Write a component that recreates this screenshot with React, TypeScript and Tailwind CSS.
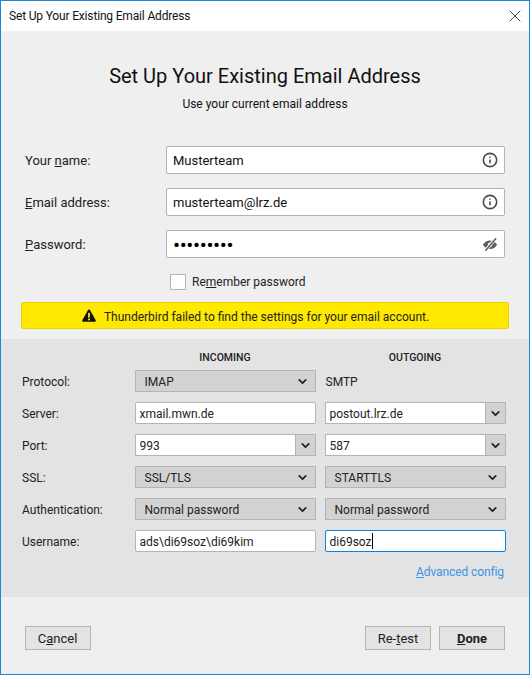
import { ChevronDown, Info, X } from "lucide-react";

const font = { fontFamily: '"Roboto", "Noto Sans", sans-serif' };

function Chevron() {
  return <ChevronDown className="w-[13px] h-[13px] text-[#222]" strokeWidth={3.2} />;
}

// plain dropdown, whole thing grey
function SelectBox({ value }: { value: string }) {
  return (
    <div className="h-[22px] flex items-center justify-between pl-[9px] pr-[6px] bg-[#d2d2d2] border border-[#b4b4b4]">
      <span className="pt-[2px]">{value}</span>
      <Chevron />
    </div>
  );
}

// text field with a grey dropdown button on the right
function Combo({ value }: { value: string }) {
  return (
    <div className="h-[22px] flex items-stretch bg-white border border-[#b4b4b4]">
      <span className="flex-1 pl-[4px] leading-[22px]">{value}</span>
      <div className="w-[20px] flex items-center justify-center bg-[#d2d2d2] border-l border-[#b4b4b4]">
        <Chevron />
      </div>
    </div>
  );
}

function TextBox({ value, focused }: { value: string; focused?: boolean }) {
  return (
    <div className={`h-[22px] flex items-center pl-[4px] bg-white border rounded-[2px] ${focused ? "border-[#0a84e0]" : "border-[#b4b4b4]"}`}>
      <span className="pt-[2px]">{value}</span>
      {focused && <span className="w-px h-[16px] bg-black" />}
    </div>
  );
}

function FieldRow({ label, value, icon, dots }: { label: React.ReactNode; value: string; icon: React.ReactNode; dots?: boolean }) {
  return (
    <div className="flex items-center pl-[24px] pr-[24px]">
      <label className="w-[141px] pt-[2px] text-[13px] text-[#222]">{label}</label>
      <div className="flex-1 h-[28px] flex items-center justify-between pl-[6px] pr-[6px] bg-white border border-[#b4b4b4] rounded-[2px]">
        <span className={dots ? "pt-[2px] text-[21px] leading-[20px] tracking-[-0.4px] text-black" : "pt-[2px] text-[13px] text-[#111]"}>{value}</span>
        {icon}
      </div>
    </div>
  );
}

function EyeSlash() {
  return (
    <svg width="16" height="15" viewBox="0 0 15 14" fill="none" className="text-[#5e5e5e]">
      <path d="M0.8 7.2C2.4 4.6 4.8 3.2 7.5 3.2s5.1 1.4 6.7 4c-1.6 2.6-4 4-6.7 4s-5.1-1.4-6.7-4z" fill="currentColor" />
      <circle cx="7.5" cy="7.2" r="2.1" fill="#fff" />
      <path d="M3 12.8L13 1.2" stroke="#fff" strokeWidth="3" />
      <path d="M3.2 12.8L13.2 1.2" stroke="currentColor" strokeWidth="1.5" />
    </svg>
  );
}

function WarnIcon() {
  return (
    <svg width="14" height="13" viewBox="0 0 14 13">
      <path d="M7 0.5c.5 0 .9.3 1.1.7l5.6 10c.4.7-.1 1.6-1 1.6H1.3c-.9 0-1.4-.9-1-1.6l5.6-10C6.100.8 6.500.500 7 .500z" fill="#111" />
      <rect x="6.100" y="3.800" width="1.800" height="4.800" fill="#ffe900" />
      <rect x="6.100" y="9.500" width="1.800" height="1.800" fill="#ffe900" />
    </svg>
  );
}

function ServerRow({ label, children }: { label: string; children: React.ReactNode }) {
  return (
    <div className="grid grid-cols-[103.5px_181px_181px] gap-x-[9px] items-center h-[22px]">
      <span className="pt-[2px]">{label}</span>
      {children}
    </div>
  );
}

function FooterButton({ children, bold }: { children: React.ReactNode; bold?: boolean }) {
  return (
    <button className={`w-[66px] h-[24px] pt-[2px] bg-[#e3e3e3] border border-[#b4b4b4] text-[13px] text-[#222] ${bold ? "font-bold" : ""}`}>
      {children}
    </button>
  );
}

export default function App() {
  return (
    <div style={font} className="w-[530px] h-[675px] flex flex-col bg-[#efefef] border border-[#1c86d8] border-x-[1.5px] text-[#111] overflow-hidden">
      {/* Title bar */}
      <div className="h-[30px] shrink-0 flex items-center justify-between bg-white pl-[8px] pr-[4px]">
        <span className="text-[12px] tracking-[-0.17px] text-[#111]">Set Up Your Existing Email Address</span>
        <X className="w-[20px] h-[20px] text-[#222]" strokeWidth={1} />
      </div>

      {/* Heading */}
      <h1 className="mt-[30px] text-center text-[20px] leading-[30px] text-[#111]">Set Up Your Existing Email Address</h1>
      <p className="mt-[4px] text-center text-[12px] leading-[18px] text-[#111]">Use your current email address</p>

      {/* Account fields */}
      <div className="mt-[33px] flex flex-col gap-[14px]">
        <FieldRow label={<>Your <u>n</u>ame:</>} value="Musterteam" icon={<Info className="w-[16px] h-[16px] text-[#4a4a4a]" strokeWidth={2.4} />} />
        <FieldRow label={<><u>E</u>mail address:</>} value="musterteam@lrz.de" icon={<Info className="w-[16px] h-[16px] text-[#4a4a4a]" strokeWidth={2.4} />} />
        <FieldRow label={<><u>P</u>assword:</>} value="•••••••••" icon={<EyeSlash />} dots />
      </div>

      <div className="mt-[15px] ml-[169px] flex items-center gap-[6px]">
        <span className="w-[16px] h-[16px] bg-white border border-[#b4b4b4]" />
        <span className="text-[12px] text-[#222]">Re<u>m</u>ember password</span>
      </div>

      {/* Warning */}
      <div className="mt-[11px] mx-[20px] h-[27px] shrink-0 flex items-center justify-center gap-[8px] pr-[19px] bg-[#ffe900] border border-[#e6d300] rounded-[2px] text-[12px] text-[#222]">
        <WarnIcon />
        <span className="pt-[2px]">Thunderbird failed to find the settings for your email account.</span>
      </div>

      {/* Server settings */}
      <div className="mt-[10px] h-[258px] shrink-0 bg-[#e3e3e3] pl-[21px] text-[12px] text-[#222]">
        <div className="grid grid-cols-[103.5px_181px_181px] gap-x-[9px] pt-[11px] h-[31px] text-[10.5px] font-medium text-center">
          <span />
          <span>INCOMING</span>
          <span>OUTGOING</span>
        </div>
        <div className="flex flex-col gap-[10px]">
          <ServerRow label="Protocol:">
            <SelectBox value="IMAP" />
            <span className="pl-[1px] pt-[2px]">SMTP</span>
          </ServerRow>
          <ServerRow label="Server:">
            <TextBox value="xmail.mwn.de" />
            <Combo value="postout.lrz.de" />
          </ServerRow>
          <ServerRow label="Port:">
            <Combo value="993" />
            <Combo value="587" />
          </ServerRow>
          <ServerRow label="SSL:">
            <SelectBox value="SSL/TLS" />
            <SelectBox value="STARTTLS" />
          </ServerRow>
          <ServerRow label="Authentication:">
            <SelectBox value="Normal password" />
            <SelectBox value="Normal password" />
          </ServerRow>
          <ServerRow label="Username:">
            <TextBox value="ads\di69soz\di69kim" />
            <TextBox value="di69soz" focused />
          </ServerRow>
        </div>
        <div className="mt-[11px] pr-[25px] text-right tracking-[-0.1px] text-[#3a94e8]">
          <u>A</u>dvanced config
        </div>
      </div>

      {/* Footer buttons */}
      <div className="mt-[29px] flex items-center pl-[23.5px] pr-[24px]">
        <FooterButton>C<u>a</u>ncel</FooterButton>
        <div className="ml-auto flex gap-[8px]">
          <FooterButton>Re-<u>t</u>est</FooterButton>
          <FooterButton bold><u>D</u>one</FooterButton>
        </div>
      </div>
    </div>
  );
}
